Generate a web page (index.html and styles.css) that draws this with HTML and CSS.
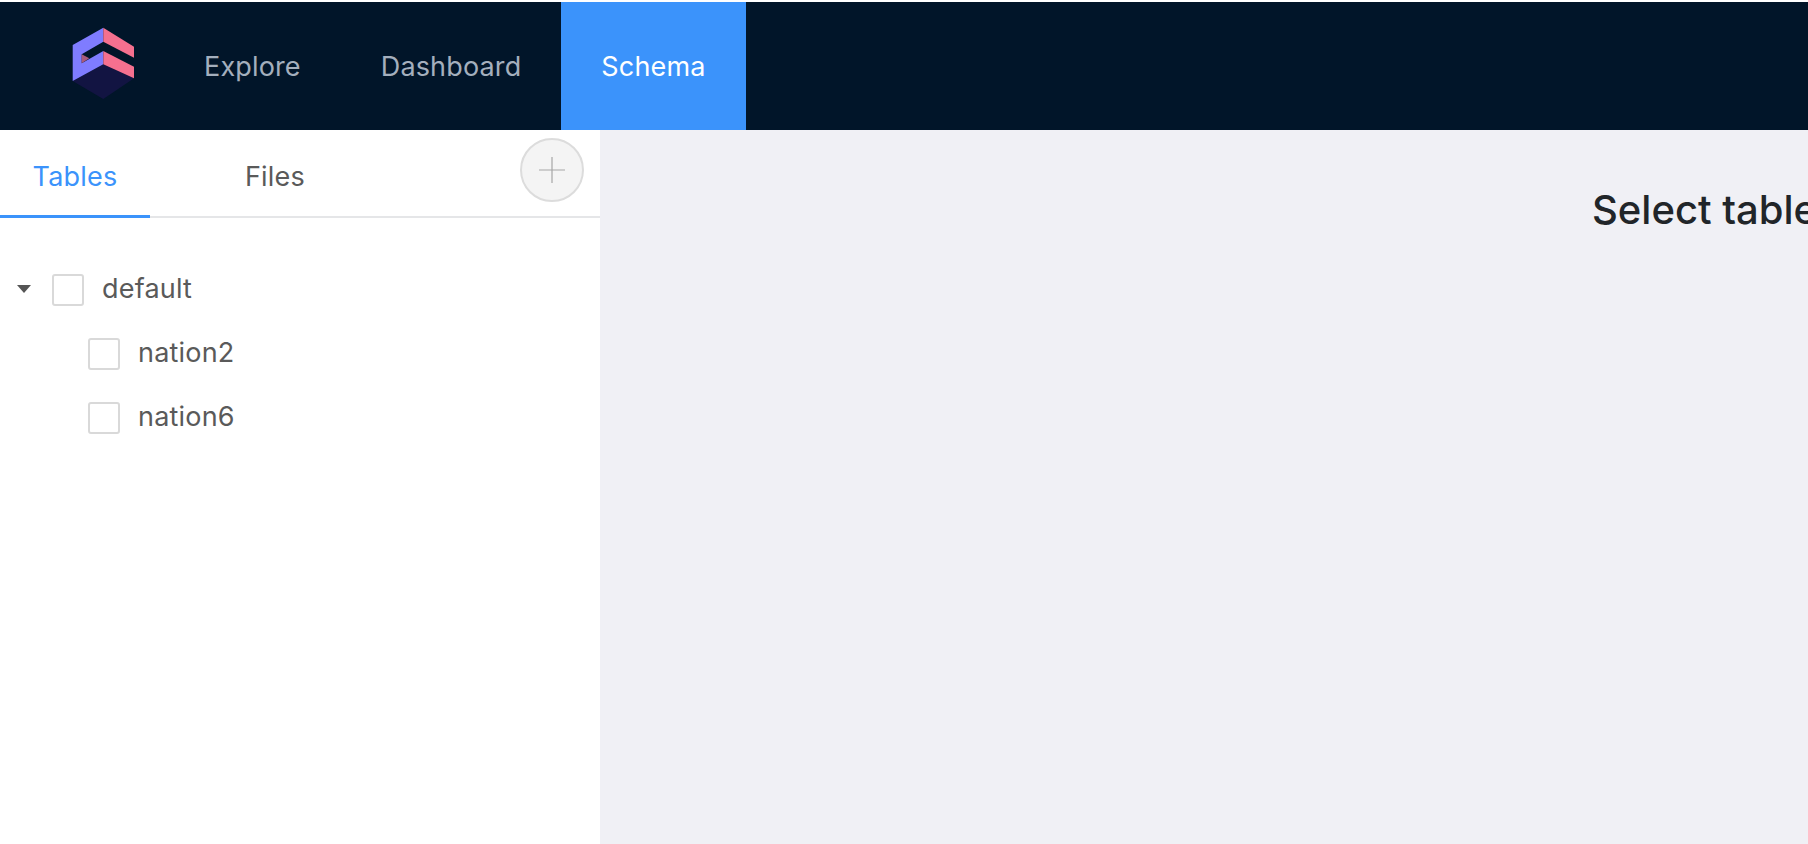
FILE: index.html
```html
<!DOCTYPE html>
<html lang="en">
<head>
    <meta charset="UTF-8">
    <title>Schema</title>
    <link rel="stylesheet" href="styles.css">
</head>
<body>
    <header class="navbar">
        <svg class="logo" width="72" height="76" viewBox="0 0 72 76">
            <polygon points="2.7,55 33.3,38.3 64,52.3 33.3,73" fill="#121442"/>
            <polygon points="2.7,19 33.3,1.7 33.3,15.7 11.7,28.3 11.7,37.3 33.3,25 33.3,38.3 2.7,55" fill="#7f7cff"/>
            <polygon points="11.7,28.3 19.3,32.3 11.7,37.3" fill="#a85a7c"/>
            <polygon points="33.3,1.7 64,20.7 64,31.7 33.3,15.7" fill="#f5708f"/>
            <polygon points="33.3,25 64,40.7 64,52.3 33.3,38.3" fill="#f5708f"/>
        </svg>
        <a class="nav-link">Explore</a>
        <a class="nav-link">Dashboard</a>
        <a class="nav-link active">Schema</a>
    </header>
    <div class="content">
        <aside class="sidebar">
            <div class="tabs">
                <div class="tab active">Tables</div>
                <div class="tab">Files</div>
                <button class="add-btn" type="button">
                    <svg width="26" height="26" viewBox="0 0 26 26"><path d="M13 0V26M0 13H26" stroke="#a6a6a6" stroke-width="1.2" fill="none"/></svg>
                </button>
            </div>
            <ul class="tree">
                <li class="tree-row">
                    <span class="caret"></span>
                    <span class="checkbox"></span>
                    <span class="tree-label">default</span>
                </li>
                <li class="tree-row child">
                    <span class="checkbox"></span>
                    <span class="tree-label">nation2</span>
                </li>
                <li class="tree-row child">
                    <span class="checkbox"></span>
                    <span class="tree-label">nation6</span>
                </li>
            </ul>
        </aside>
        <main class="main">
            <h2 class="placeholder">Select table</h2>
        </main>
    </div>
</body>
</html>
```

FILE: styles.css
```css
html, body {
    height: 100%;
}
body {
    margin: 0;
    font-family: Inter, "Liberation Sans", sans-serif;
    background-color: #fff;
    overflow: hidden;
    display: flex;
    flex-direction: column;
    padding-top: 2px;
    box-sizing: border-box;
}
.navbar {
    height: 128px;
    flex: none;
    display: flex;
    align-items: stretch;
    background-color: #011529;
    padding-left: 70px;
}
.logo {
    align-self: flex-start;
    margin-top: 24px;
    margin-right: 22px;
}
.nav-link {
    display: flex;
    align-items: center;
    padding: 0 40px;
    font-size: 27px;
    letter-spacing: 0.15px;
    color: #a4afbd;
}
.nav-link.active {
    background-color: #3b93fb;
    color: #fff;
}
.content {
    flex: 1;
    display: flex;
    min-height: 0;
}
.sidebar {
    width: 600px;
    flex: none;
    background-color: #fff;
}
.tabs {
    height: 86px;
    display: flex;
    align-items: stretch;
    border-bottom: 2px solid #e5e6e8;
    position: relative;
}
.tab {
    width: 150px;
    box-sizing: border-box;
    padding-top: 30px;
    text-align: center;
    font-size: 27px;
    letter-spacing: 0.2px;
    color: #5a5a5a;
}
.tab.active {
    color: #3b93fb;
    height: 88px;
    border-bottom: 3px solid #3b93fb;
}
.tab + .tab {
    margin-left: 50px;
}
.add-btn {
    position: absolute;
    top: 8px;
    right: 16px;
    width: 64px;
    height: 64px;
    padding: 0;
    display: flex;
    align-items: center;
    justify-content: center;
    border: 2px solid #dcdcdc;
    border-radius: 50%;
    background-color: #f4f4f4;
}
.tree {
    list-style: none;
    margin: 0;
    padding: 38px 0 0;
}
.tree-row {
    height: 64px;
    display: flex;
    align-items: center;
    padding-left: 17px;
    font-size: 27px;
    letter-spacing: 0.2px;
    color: #5a5a5a;
}
.tree-row.child {
    padding-left: 88px;
}
.caret {
    width: 0;
    height: 0;
    border-left: 7px solid transparent;
    border-right: 7px solid transparent;
    border-top: 8px solid #555;
    margin: 2px 21px 0 0;
}
.checkbox {
    width: 32px;
    height: 32px;
    box-sizing: border-box;
    border: 2px solid #d9d9d9;
    border-radius: 3px;
    background-color: #fff;
    margin: 4px 18px 0 0;
}
.main {
    flex: 1;
    min-width: 0;
    background-color: #f0f0f5;
    overflow: hidden;
}
.placeholder {
    margin: 55px 0 0 992px;
    font-size: 40px;
    font-weight: 450;
    color: #212529;
    white-space: nowrap;
}
```
